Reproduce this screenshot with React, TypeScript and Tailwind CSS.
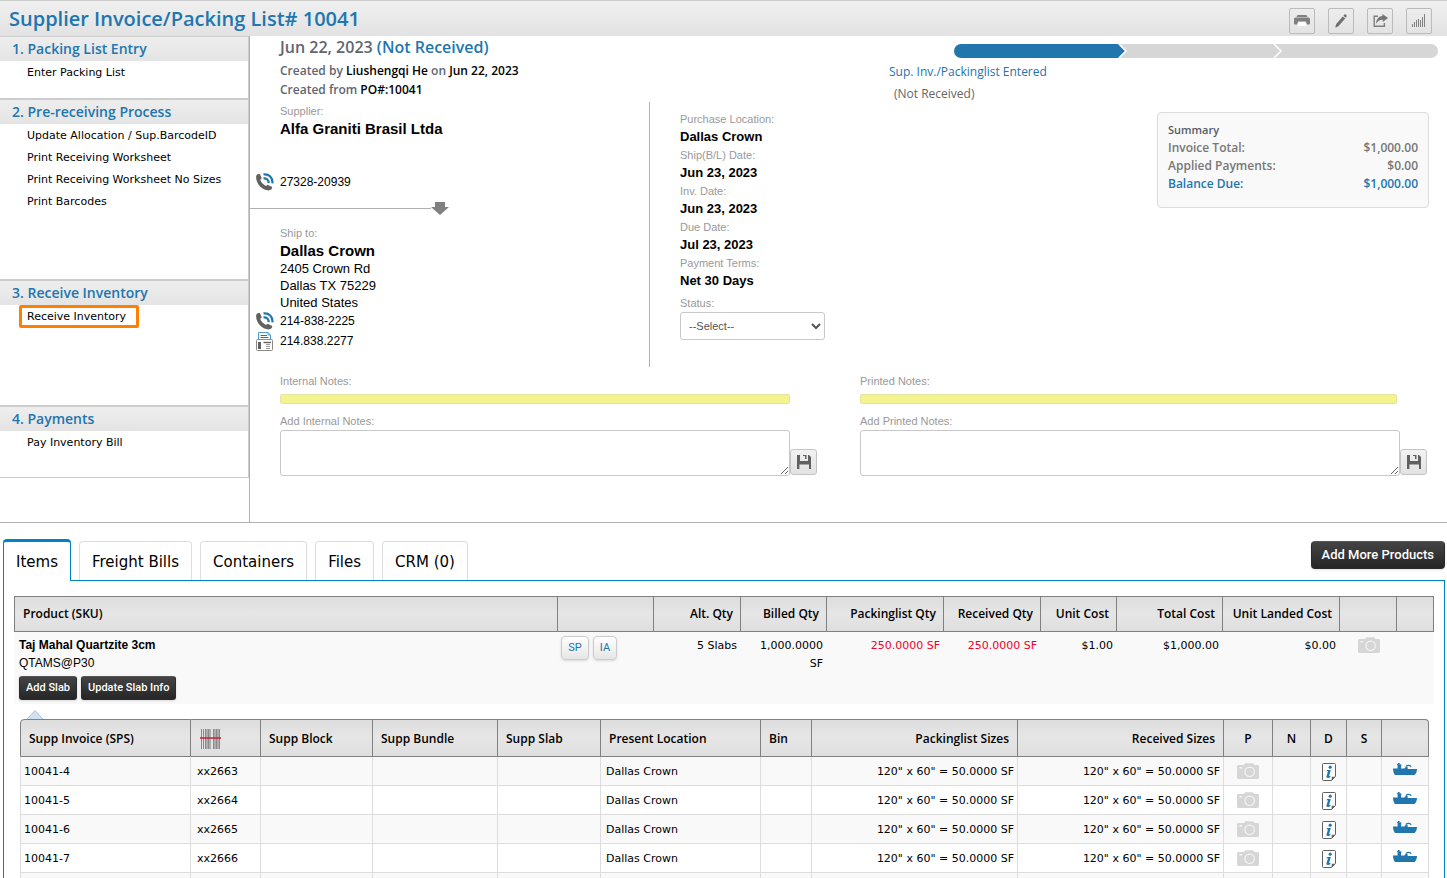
import React from 'react';

const sections = [
  { title: '1. Packing List Entry', links: ['Enter Packing List'], head: 'h-[25px] border-t', body: 'h-[37px]' },
  {
    title: '2. Pre-receiving Process',
    links: ['Update Allocation / Sup.BarcodeID', 'Print Receiving Worksheet', 'Print Receiving Worksheet No Sizes', 'Print Barcodes'],
    head: 'h-[26px] border-t-2',
    body: 'h-[155px]',
  },
  { title: '3. Receive Inventory', links: ['Receive Inventory'], head: 'h-[26px] border-t-2', body: 'h-[100px]' },
  { title: '4. Payments', links: ['Pay Inventory Bill'], head: 'h-[26px] border-t-2', body: 'h-[46px]' },
];

const details = [
  ['Purchase Location:', 'Dallas Crown'],
  ['Ship(B/L) Date:', 'Jun 23, 2023'],
  ['Inv. Date:', 'Jun 23, 2023'],
  ['Due Date:', 'Jul 23, 2023'],
  ['Payment Terms:', 'Net 30 Days'],
];

const tabs = ['Items', 'Freight Bills', 'Containers', 'Files', 'CRM (0)'];

const productHeads = [
  { label: 'Product (SKU)', cls: 'text-left' },
  { label: '', cls: 'w-[96px]' },
  { label: 'Alt. Qty', cls: 'w-[87px] text-right' },
  { label: 'Billed Qty', cls: 'w-[86px] text-right' },
  { label: 'Packinglist Qty', cls: 'w-[117px] text-right' },
  { label: 'Received Qty', cls: 'w-[97px] text-right' },
  { label: 'Unit Cost', cls: 'w-[76px] text-right' },
  { label: 'Total Cost', cls: 'w-[106px] text-right' },
  { label: 'Unit Landed Cost', cls: 'w-[117px] text-right' },
  { label: '', cls: 'w-[57px]' },
  { label: '', cls: 'w-[37px]' },
];

const slabHeads = [
  { label: 'Supp Invoice (SPS)', cls: 'w-[171px] text-left' },
  { label: 'barcode', cls: 'w-[70px] text-left' },
  { label: 'Supp Block', cls: 'w-[112px] text-left' },
  { label: 'Supp Bundle', cls: 'w-[125px] text-left' },
  { label: 'Supp Slab', cls: 'w-[103px] text-left' },
  { label: 'Present Location', cls: 'text-left' },
  { label: 'Bin', cls: 'w-[51px] text-left' },
  { label: 'Packinglist Sizes', cls: 'w-[206px] text-right' },
  { label: 'Received Sizes', cls: 'w-[206px] text-right' },
  { label: 'P', cls: 'w-[49px] text-center' },
  { label: 'N', cls: 'w-[38px] text-center' },
  { label: 'D', cls: 'w-[36px] text-center' },
  { label: 'S', cls: 'w-[35px] text-center' },
  { label: '', cls: 'w-[47px]' },
];

const slabs = [
  ['10041-4', 'xx2663'],
  ['10041-5', 'xx2664'],
  ['10041-6', 'xx2665'],
  ['10041-7', 'xx2666'],
];

const PhoneIcon = () => (
  <svg width="18" height="18" viewBox="0 0 18 18">
    <path d="M.2 3C.8 1.2 2 .8 3.8 1L5.8 5.2 4.2 6.8C5.2 9.4 7.4 11.8 10 13L11.6 11.8 16.2 14C16.4 16 15 17.4 12.6 17.4 5.6 17-.6 10 .2 3Z" fill="#616161" />
    <path d="M7.5 1.4C13 .6 17 4.6 16.4 10.4" fill="none" stroke="#2176ae" strokeWidth="2.2" />
    <path d="M7.5 5.4C10.6 5 13 7 12.6 10.2" fill="none" stroke="#2176ae" strokeWidth="2.2" />
  </svg>
);

const FaxIcon = () => (
  <svg width="18" height="19" viewBox="0 0 18 19" fill="none">
    <path d="M2.5 8V.5H12L14.5 3V8" fill="#fff" stroke="#4f9bc9" />
    <path d="M12 .5V3H14.5" stroke="#4f9bc9" />
    <path d="M4.5 3.5H11M4.5 5.5H12.5" stroke="#2176ae" />
    <rect x=".5" y="7.5" width="16" height="11" rx="1" fill="#fff" stroke="#8a8a8a" />
    <rect x="2" y="10" width="3" height="7" fill="#616161" />
    <path d="M7.5 10.5H15" stroke="#616161" strokeWidth="1.4" />
    <path d="M10 12.5H14M10 14.5H14M10 16.5H14" stroke="#9a9a9a" />
  </svg>
);

const CameraIcon = () => (
  <svg width="22" height="16" viewBox="0 0 22 16" className="inline-block">
    <path d="M0 3.5C0 2.5.6 2 1.4 2H7L8.4.3H16L17.4 2H20.6C21.5 2 22 2.6 22 3.5V14.6C22 15.5 21.4 16 20.6 16H1.4C.5 16 0 15.4 0 14.6Z" fill="#d6d6d6" />
    <circle cx="12.6" cy="8.8" r="4.7" fill="none" stroke="#f5f5f5" strokeWidth="1.2" />
    <rect x="2.5" y="4" width="2.5" height="1.5" fill="#f5f5f5" />
  </svg>
);

const InfoIcon = () => (
  <svg width="14" height="18" viewBox="0 0 14 18" className="inline-block">
    <path d="M1.5.5H12.5C13.2.5 13.5.8 13.5 1.5V13.5L9.5 17.5H1.5C.8 17.5.5 17.2.5 16.5V1.5C.5.8.8.5 1.5.5Z" fill="#fff" stroke="#616161" />
    <path d="M9.6 17.5V15C9.6 14.2 10 13.8 10.8 13.8H13.5Z" fill="#616161" />
    <circle cx="8.2" cy="4.2" r="1.6" fill="#2176ae" />
    <path d="M4.4 8.2L5.2 7H8.8L7 13.2 8.6 12.8 8.4 14C7.4 15.2 5.4 15.4 4.6 14.6 4.2 14 4.6 13 6 8.2Z" fill="#2176ae" />
  </svg>
);

const ShipIcon = () => (
  <svg width="24" height="12" viewBox="0 0 24 12" className="inline-block">
    <path d="M0 5.4H4.6V2.4L3.8.6 5 1V0H6.6V1.4L8.4 1.2 8 5.6H11.4L12.6 4 14.4 3.8 14.8 6H24C24 8.6 23 10.6 21.6 12H2C.8 10.4 0 8 0 5.4Z" fill="#2176ae" />
    <path d="M12.8 3.6C14.2 2 17.4 1.8 18.2 4" fill="none" stroke="#2176ae" strokeWidth="1.1" />
  </svg>
);

const BarcodeIcon = () => (
  <svg width="21" height="20" viewBox="0 0 21 20" className="ml-px">
    <path d="M1.5 0V20M3.5 0V20M5.5 0V20M8.5 0V20M13.5 0V20M16.5 0V20M19.5 0V20" stroke="#8a8a8a" />
    <path d="M7 0V20M10 0V20M15 0V20M18 0V20" stroke="#777" />
    <path d="M0 9H21" stroke="#d0112b" strokeWidth="1.4" />
  </svg>
);

const SaveIcon = () => (
  <svg width="14" height="14" viewBox="0 0 14 14">
    <path d="M0 0H3V6H11V0H12L14 2V14H12V9.6H2.4V14H0Z" fill="#616161" />
    <path d="M6 0H9.5V4H8V1H6Z" fill="#616161" />
  </svg>
);

const toolIcons: { name: string; icon: React.ReactNode }[] = [
  {
    name: 'Print',
    icon: (
      <svg width="16" height="12" viewBox="0 0 16 12">
        <path d="M3.6 0H12.4L13.6 2H2.4ZM1.6 2.4H14.4C15.4 2.4 16 3.2 16 4V8.2C16 9 15.4 9.6 14.6 9.6H13L11.8 6.6H4.2L3 9.6H1.4C.6 9.6 0 9 0 8.2V4C0 3.2.6 2.4 1.6 2.4Z" fill="#808080" />
        <path d="M4.6 7.2H11.4L12.2 11H3.8Z" fill="#fff" />
      </svg>
    ),
  },
  {
    name: 'Edit',
    icon: (
      <svg width="12" height="14" viewBox="0 0 12 14">
        <path d="M9.4.4C10.4-.2 12 1 11.6 2.4L10.8 3.8 8.4 1.8ZM7.8 2.5L10.2 4.5 3.4 12.2 .3 13.7 1 10.3Z" fill="#707070" />
      </svg>
    ),
  },
  {
    name: 'Share',
    icon: (
      <svg width="15" height="13" viewBox="0 0 15 13">
        <path d="M5 2.2H1.2V12.2H11.4V9" fill="none" stroke="#808080" strokeWidth="1.4" />
        <path d="M9.4 0L15 4 9.8 8V5.8C7 5.6 5 6.8 3 9.6 3.4 5 6 2.2 9.4 2Z" fill="#757575" />
      </svg>
    ),
  },
  {
    name: 'Statistics',
    icon: (
      <svg width="14" height="13" viewBox="0 0 14 13">
        <path d="M.5 10V13M2.5 8V13M4.5 6V13M6.5 5V13M8.5 6V13M10.5 3V13M12.5 0V13" stroke="#808080" />
      </svg>
    ),
  },
];

const Notes: React.FC<{ kind: string; barClass: string; className: string }> = ({ kind, barClass, className }) => (
  <div className={className}>
    <p className="text-[11px] leading-[14px] text-[#999]">{kind} Notes:</p>
    <div className={`mt-1.5 h-2.5 rounded-xs border border-[#e6e3a0] bg-[#f4f48e] ${barClass}`} />
    <label htmlFor={`notes-${kind}`} className="mt-2.5 block text-[11px] leading-[14px] text-[#999]">
      Add {kind} Notes:
    </label>
    <div className="mt-0.5 flex items-end">
      <textarea id={`notes-${kind}`} className="block h-[46px] min-w-0 flex-1 rounded-[3px] border border-[#c8c8c8] bg-white px-2 text-xs" />
      <button type="button" aria-label={`Save ${kind} notes`} className="mb-px flex h-[26px] w-[27px] shrink-0 items-center justify-center rounded-[3px] border border-[#c4c4c4] bg-linear-to-b from-[#f2f2f2] to-[#e2e2e2]">
        <SaveIcon />
      </button>
    </div>
  </div>
);

const darkButton = 'bg-linear-to-b from-[#444] to-[#262626] border border-[#2a2a2a] border-t-[#555] text-white font-medium font-[Roboto,sans-serif] shadow-sm';
const lightButton = "h-6 rounded-[4px] border border-[#ccc] bg-linear-to-b from-white to-[#e6e6e6] font-[Roboto,sans-serif] text-[11px] text-[#2176ae] shadow-sm";
const headFont = "font-['Open_Sans',sans-serif] text-[12px] font-semibold";
const headCell = 'border-y border-r border-[#808080] bg-linear-to-b from-[#ddd] via-[#e6e6e6] to-[#dedede]';

const Sidebar: React.FC = () => (
  <nav className="w-[249px] shrink-0">
    <div className="border-r border-b border-[#ccc]">
      {sections.map((section) => (
        <section key={section.title}>
          <h2 className={`border-[#ccc] bg-linear-to-b from-[#eee] to-[#e4e4e4] pl-3 font-['Open_Sans',sans-serif] text-[14px] leading-6 font-semibold text-[#2176ae] ${section.head}`}>
            {section.title}
          </h2>
          <ul className={`pt-px pl-[27px] font-['DejaVu_Sans',sans-serif] text-[11px] leading-[22px] ${section.body}`}>
            {section.links.map((link) => (
              <li key={link} className="relative">
                <a href="#" className="text-black">{link}</a>
                {link === 'Receive Inventory' && <span className="absolute -top-px -left-2 h-[23px] w-[120px] rounded-xs border-3 border-[#ff8000]" />}
              </li>
            ))}
          </ul>
        </section>
      ))}
    </div>
  </nav>
);

const Overview: React.FC = () => (
  <main className="min-w-0 flex-1 border-l border-[#b0b0b0] pt-px pb-[46px]">
    <div className="flex">
      <div className="w-[400px] shrink-0">
        <div className="h-[65px] pl-[30px] font-['Open_Sans',sans-serif] text-[12px] leading-[19px] font-semibold text-[#5f6670]">
          <h2 className="pb-1 text-[16px] leading-5">
            Jun 22, 2023 <span className="text-[#2176ae]">(Not Received)</span>
          </h2>
          <p>Created by <span className="text-black">Liushengqi He</span> on <span className="text-black">Jun 22, 2023</span></p>
          <p>Created from <span className="text-black">PO#:10041</span></p>
        </div>
        <div className="h-[265px] border-r border-[#b0b0b0] pt-0.5">
          <div className="pl-[30px]">
            <p className="text-[11px] leading-[14px] text-[#999]">Supplier:</p>
            <p className="pt-0.5 text-[15px] leading-[18px] font-bold">Alfa Graniti Brasil Ltda</p>
          </div>
          <div className="mt-[34px] flex h-5 items-center gap-1.5 pl-1.5 text-[12px]">
            <PhoneIcon /> 27328-20939
          </div>
          <div className="mt-2 flex h-4 items-center">
            <span className="h-px w-[181px] bg-[#b0b0b0]" />
            <svg width="18" height="13" viewBox="0 0 18 13">
              <path d="M4 0H14V5H18L9 13 0 5H4Z" fill="#808080" />
            </svg>
          </div>
          <div className="mt-2.5 pl-[30px]">
            <p className="text-[11px] leading-[14px] text-[#999]">Ship to:</p>
            <p className="pt-0.5 text-[15px] leading-[18px] font-bold">Dallas Crown</p>
            <p className="text-[13px] leading-[17px]">2405 Crown Rd</p>
            <p className="text-[13px] leading-[17px]">Dallas TX 75229</p>
            <p className="text-[13px] leading-[17px]">United States</p>
          </div>
          <div className="flex h-5 items-center gap-1.5 pl-1.5 text-[12px]">
            <PhoneIcon /> 214-838-2225
          </div>
          <div className="flex h-5 items-center gap-1.5 pl-1.5 text-[12px]">
            <FaxIcon /> 214.838.2277
          </div>
        </div>
      </div>

      <div className="w-[239px] shrink-0 pt-[75px] pl-[30px]">
        <dl>
          {details.map(([label, value]) => (
            <div key={label} className="h-9">
              <dt className="text-[11px] leading-[14px] text-[#999]">{label}</dt>
              <dd className="text-[13px] leading-[22px] font-bold">{value}</dd>
            </div>
          ))}
        </dl>
        <label htmlFor="status" className="mt-1 mb-0.5 block text-[11px] leading-[14px] text-[#999]">Status:</label>
        <select id="status" className="h-7 w-[145px] rounded-[3px] border border-[#c8c8c8] bg-white px-1 text-[11px] text-[#555]">
          <option>--Select--</option>
        </select>
      </div>

      <div className="min-w-0 flex-1 pt-[7px] font-['Open_Sans',sans-serif] text-[12px]">
        <svg viewBox="0 0 484 14" className="ml-[65px] block w-[calc(100%-74px)]">
          <path d="M160 0H477A7 7 0 0 1 477 14H160Z" fill="#d6d6d6" />
          <path d="M7 0H164L171 7 164 14H7A7 7 0 0 1 7 0Z" fill="#2176ae" />
          <path d="M165 0L172 7 165 14M320 0L327 7 320 14" fill="none" stroke="#fff" strokeWidth="1.5" />
        </svg>
        <p className="mt-1 leading-5 text-[#2176ae]">Sup. Inv./Packinglist Entered</p>
        <p className="mt-0.5 pl-[5px] leading-5 text-[#666]">(Not Received)</p>
        <section className="mt-2 mr-[18px] ml-auto h-24 w-[272px] rounded-[4px] border border-[#dcdcdc] bg-[#f9f9f9] px-2.5 pt-2 leading-[18px] font-semibold text-[#777]">
          <h3 className="text-[11px] text-[#555b66]">Summary</h3>
          <p className="flex justify-between">Invoice Total: <span>$1,000.00</span></p>
          <p className="flex justify-between">Applied Payments: <span>$0.00</span></p>
          <p className="flex justify-between text-[#2176ae]">Balance Due: <span>$1,000.00</span></p>
        </section>
      </div>
    </div>

    <div className="flex pt-[7px] pr-5 pl-[30px]">
      <Notes kind="Internal" className="w-[537px] shrink-0" barClass="mr-[27px]" />
      <Notes kind="Printed" className="ml-[43px] min-w-0 flex-1" barClass="mr-[30px]" />
    </div>
  </main>
);

const slabRow = 'odd:bg-[#f9f9f9] [&>td]:h-[29px] [&>td]:border-r [&>td]:border-b [&>td]:border-[#ddd] [&>td]:px-1 [&>td]:pt-0.5 [&>td:first-child]:border-l';

const SlabTable: React.FC = () => (
  <table className="w-full table-fixed border-separate border-spacing-0">
    <thead>
      <tr className={headFont}>
        {slabHeads.map(({ label, cls }, i) => (
          <th key={i} className={`h-[38px] px-2 pt-0.5 font-semibold first:rounded-tl-[4px] first:border-l last:rounded-tr-[4px] ${headCell} ${cls}`}>
            {label === 'barcode' ? <BarcodeIcon /> : label}
          </th>
        ))}
      </tr>
    </thead>
    <tbody className="font-['DejaVu_Sans',sans-serif] text-[11px]">
      {slabs.map(([sps, code]) => (
        <tr key={sps} className={slabRow}>
          <td className="pl-[3px]!">{sps}</td>
          <td className="pl-1.5!">{code}</td>
          <td />
          <td />
          <td />
          <td className="pl-[5px]!">Dallas Crown</td>
          <td />
          <td className="pr-[3px]! text-right">120" x 60" = 50.0000 SF</td>
          <td className="pr-[3px]! text-right">120" x 60" = 50.0000 SF</td>
          <td className="pt-0! text-center"><CameraIcon /></td>
          <td />
          <td className="text-center"><InfoIcon /></td>
          <td />
          <td className="pt-0! pb-1 text-center"><ShipIcon /></td>
        </tr>
      ))}
      <tr className={slabRow}>
        {slabHeads.map((_, i) => (
          <td key={i} />
        ))}
      </tr>
    </tbody>
  </table>
);

const App: React.FC = () => {
  return (
    <div className="h-screen overflow-hidden bg-white font-['Liberation_Sans',Arial,sans-serif] text-black">
      <header className="flex h-9 items-center justify-between border-t border-[#ccc] bg-linear-to-b from-[#f0f0f0] to-[#e2e2e2] pr-[15px] pl-[9px]">
        <h1 className="font-['Open_Sans',sans-serif] text-[20px] leading-7 font-semibold text-[#2176ae]">Supplier Invoice/Packing List# 10041</h1>
        <div className="flex gap-[13px] pt-1">
          {toolIcons.map(({ name, icon }) => (
            <button key={name} type="button" aria-label={name} className="flex size-[26px] items-center justify-center rounded-xs border border-[#bbb]">
              {icon}
            </button>
          ))}
        </div>
      </header>

      <div className="flex border-b border-[#b0b0b0]">
        <Sidebar />
        <Overview />
      </div>

      <div className="flex items-start justify-between pt-4 pr-0.5 pl-[3px]">
        <div role="tablist" className="relative z-10 -mb-px flex items-end gap-2 font-['DejaVu_Sans',sans-serif] text-[15px]">
          {tabs.map((tab, i) => (
            <button
              key={tab}
              type="button"
              role="tab"
              aria-selected={i === 0}
              className={
                i === 0
                  ? 'h-[42px] rounded-t-[4px] border border-t-3 border-b-0 border-[#0082c8] bg-white px-3 pt-0.5'
                  : 'mb-px h-[39px] rounded-t-[4px] border border-b-0 border-[#ddd] bg-white px-3 pt-0.5'
              }
            >
              {tab}
            </button>
          ))}
        </div>
        <button type="button" className={`mt-0.5 h-7 rounded-[4px] px-2.5 text-[13px] ${darkButton}`}>Add More Products</button>
      </div>

      <div className="mr-0.5 ml-[3px] border border-[#0082c8] px-2.5 pt-[15px]">
        <table className="w-full table-fixed border-separate border-spacing-0">
          <thead>
            <tr className={headFont}>
              {productHeads.map(({ label, cls }, i) => (
                <th key={i} className={`h-9 px-[7px] font-semibold first:border-l first:pl-2 ${headCell} ${cls}`}>{label}</th>
              ))}
            </tr>
          </thead>
          <tbody className="font-['DejaVu_Sans',sans-serif] text-[11px] leading-[18px]">
            <tr className="h-[72px] bg-[#f9f9f9] text-right align-top [&>td]:px-1 [&>td]:pt-[5px]">
              <td className="pt-1! pl-[5px]! text-left font-['Liberation_Sans',sans-serif]">
                <p className="text-[12px] font-bold">Taj Mahal Quartzite 3cm</p>
                <p className="text-[12px]">QTAMS@P30</p>
                <div className="mt-1 flex gap-1">
                  <button type="button" className={`h-6 rounded-[3px] px-1.5 text-[11px] leading-5 ${darkButton}`}>Add Slab</button>
                  <button type="button" className={`h-6 rounded-[3px] px-1.5 text-[11px] leading-5 ${darkButton}`}>Update Slab Info</button>
                </div>
              </td>
              <td className="pt-1! pl-[3px]!">
                <div className="flex gap-1">
                  <button type="button" className={`w-7 ${lightButton}`}>SP</button>
                  <button type="button" className={`w-6 ${lightButton}`}>IA</button>
                </div>
              </td>
              <td>5 Slabs</td>
              <td>1,000.0000 SF</td>
              <td className="text-[#f00028]">250.0000 SF</td>
              <td className="text-[#f00028]">250.0000 SF</td>
              <td>$1.00</td>
              <td>$1,000.00</td>
              <td>$0.00</td>
              <td className="pt-1! text-center"><CameraIcon /></td>
              <td />
            </tr>
          </tbody>
        </table>
        <div className="pt-1.5 pr-[5px] pl-1.5">
          <svg width="16" height="9" viewBox="0 0 16 9" className="ml-[7px] block">
            <path d="M0 9L8 .5 16 9" fill="#cfe0f0" stroke="#a9c4dc" />
          </svg>
          <SlabTable />
        </div>
      </div>
    </div>
  );
};

export default App;
